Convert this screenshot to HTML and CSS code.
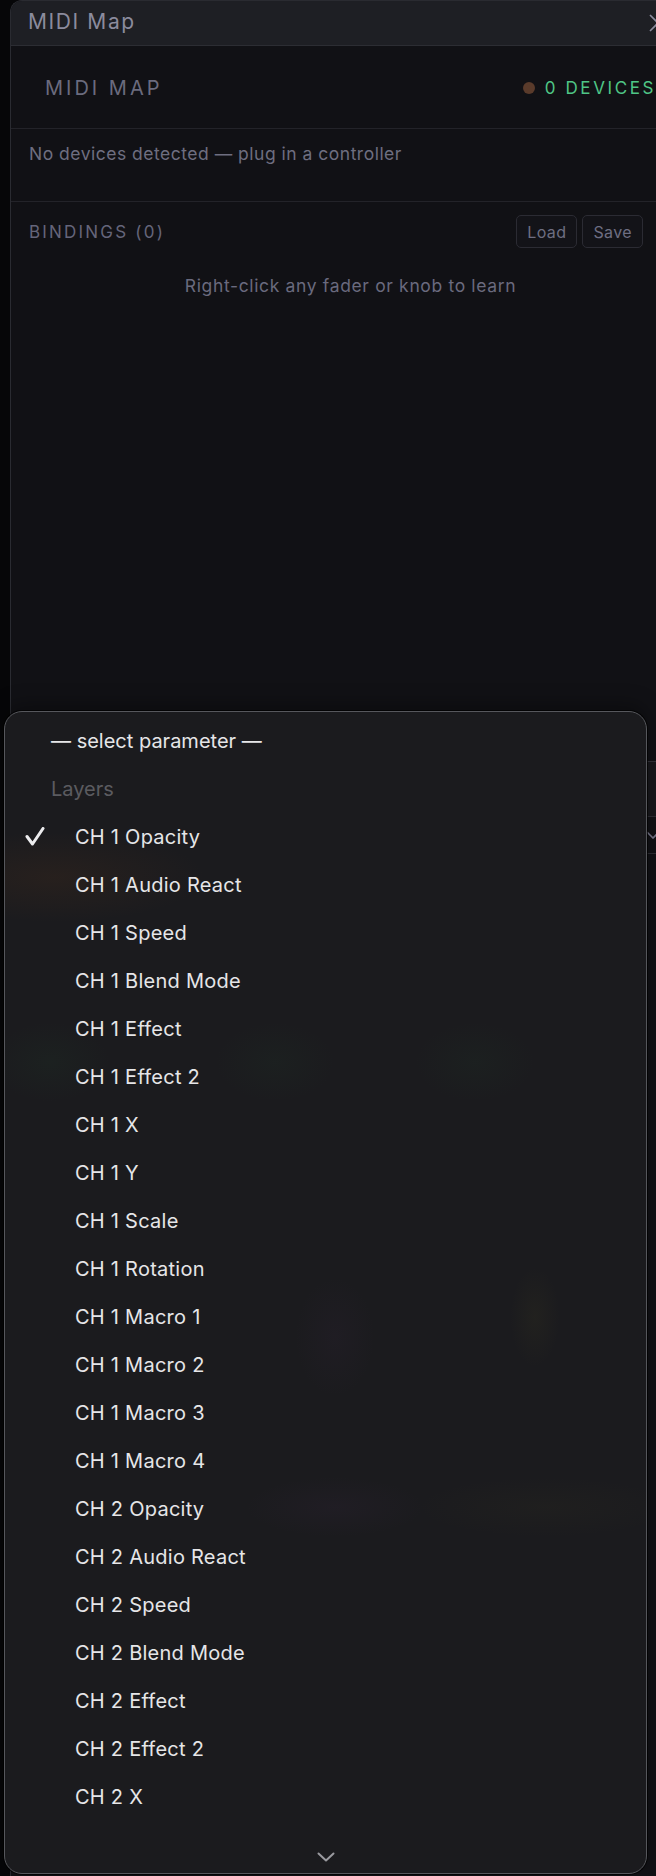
FILE: index.html
```html
<!DOCTYPE html>
<html lang="en">
<head>
<meta charset="utf-8">
<title>MIDI Map</title>
<link rel="stylesheet" href="styles.css">
</head>
<body>
<div class="stage">
  <section class="panel">
    <header class="titlebar">
      <span class="title">MIDI Map</span>
      <svg class="close" width="20" height="20" viewBox="0 0 20 20"><path d="M2 2 L18 18 M18 2 L2 18"/></svg>
    </header>
    <div class="sec head">
      <span class="h">MIDI MAP</span>
      <span class="devices"><i class="dot"></i>0 DEVICES</span>
    </div>
    <div class="sec devs">
      <p>No devices detected — plug in a controller</p>
    </div>
    <div class="sec bindings">
      <div class="brow">
        <span class="blabel">BINDINGS (0)</span>
        <div class="btns">
          <button class="btn">Load</button>
          <button class="btn">Save</button>
          <button class="btn learn">+</button>
        </div>
      </div>
      <p class="empty">Right-click any fader or knob to learn</p>
      <div class="learnbox">
        <div class="learnhead"></div>
        <div class="learnsel">
          <svg width="14" height="8" viewBox="0 0 14 8"><path d="M1 1 L7 7 L13 1"/></svg>
        </div>
      </div>
    </div>
  </section>

  <div class="menu">
    <ul class="list">
      <li class="item hdr">— select parameter —</li>
      <li class="item hdr group">Layers</li>
      <li class="item checked"><svg class="check" width="20" height="20" viewBox="0 0 20 20"><path d="M2 9.5 L7.5 17 L18 1.5"/></svg>CH 1 Opacity</li>
      <li class="item">CH 1 Audio React</li>
      <li class="item">CH 1 Speed</li>
      <li class="item">CH 1 Blend Mode</li>
      <li class="item">CH 1 Effect</li>
      <li class="item">CH 1 Effect 2</li>
      <li class="item">CH 1 X</li>
      <li class="item">CH 1 Y</li>
      <li class="item">CH 1 Scale</li>
      <li class="item">CH 1 Rotation</li>
      <li class="item">CH 1 Macro 1</li>
      <li class="item">CH 1 Macro 2</li>
      <li class="item">CH 1 Macro 3</li>
      <li class="item">CH 1 Macro 4</li>
      <li class="item">CH 2 Opacity</li>
      <li class="item">CH 2 Audio React</li>
      <li class="item">CH 2 Speed</li>
      <li class="item">CH 2 Blend Mode</li>
      <li class="item">CH 2 Effect</li>
      <li class="item">CH 2 Effect 2</li>
      <li class="item">CH 2 X</li>
    </ul>
    <div class="more">
      <svg width="18" height="10" viewBox="0 0 18 10"><path d="M1.5 1.5 L9 8.5 L16.5 1.5"/></svg>
    </div>
  </div>
</div>
</body>
</html>
```

FILE: styles.css
```css
html, body {
  margin: 0;
  padding: 0;
}
body {
  background: #060608;
  font-family: Inter, "Noto Sans", "Liberation Sans", sans-serif;
  overflow: hidden;
}
.stage {
  position: relative;
  width: 656px;
  height: 1876px;
  overflow: hidden;
}

/* ---------- panel ---------- */
.panel {
  margin-left: 10px;
  width: 680px;
  height: 1876px;
  box-sizing: border-box;
  background: #111115;
  border-left: 1px solid #2a2b31;
  border-top: 1px solid #2a2b31;
  border-top-left-radius: 12px;
  overflow: hidden;
}
.titlebar {
  height: 45px;
  box-sizing: border-box;
  background: #1e1f24;
  border-bottom: 1px solid #2c2d33;
  display: flex;
  align-items: center;
  justify-content: space-between;
  padding: 0 18px 4px 17px;
}
.title {
  font-size: 21px;
  letter-spacing: 1.6px;
  color: #8b8b9d;
}
.close {
  margin-right: 4px;
  margin-top: 4px;
  fill: none;
  stroke: #8b8b9d;
  stroke-width: 1.6;
}
.sec {
  border-bottom: 1px solid #232329;
}
.head {
  height: 83px;
  box-sizing: border-box;
  display: flex;
  align-items: center;
  justify-content: space-between;
  padding: 2px 34px 0;
}
.h {
  font-size: 20px;
  letter-spacing: 3px;
  color: #6b6b7e;
}
.devices {
  display: flex;
  align-items: center;
  font-size: 17px;
  letter-spacing: 2.6px;
  color: #4fc586;
}
.dot {
  width: 12px;
  height: 12px;
  border-radius: 50%;
  background: #5a3b2b;
  margin-right: 10px;
}
.devs {
  height: 73px;
  box-sizing: border-box;
  padding: 13px 18px 0;
}
.devs p {
  margin: 0;
  font-size: 17.5px;
  line-height: 24px;
  letter-spacing: 0.5px;
  color: #6e6e80;
}
.bindings {
  border-bottom: none;
  padding: 13px 18px 0;
}
.brow {
  display: flex;
  align-items: center;
  justify-content: space-between;
}
.blabel {
  font-size: 17px;
  letter-spacing: 2.2px;
  color: #65657a;
}
.btns {
  display: flex;
  gap: 5px;
}
.btn {
  height: 33px;
  box-sizing: border-box;
  padding: 0 10px;
  background: #131318;
  border: 1px solid #2b2b33;
  border-radius: 5px;
  font-family: inherit;
  font-size: 16px;
  letter-spacing: 0.4px;
  color: #6e6e82;
}
.btn.learn {
  border-color: transparent;
  background: transparent;
  color: #e0823c;
  padding: 0 2px;
  margin-left: 7px;
}
.empty {
  margin: 26px 0 0;
  text-align: center;
  font-size: 17.5px;
  line-height: 24px;
  letter-spacing: 0.65px;
  color: #6a6a7e;
}

/* rows hidden behind the popup, only their right edge shows */
.learnbox {
  margin-top: 463px;
  margin-right: -18px;
}
.learnhead {
  height: 54px;
  background: #18181c;
  border-top: 1px solid #34343a;
}
.learnsel {
  height: 36px;
  border-top: 1px solid #2e2e34;
  border-bottom: 1px solid #2e2e34;
  display: flex;
  align-items: center;
  justify-content: flex-end;
  padding-right: 30px;
}
.learnsel svg {
  fill: none;
  stroke: #77778a;
  stroke-width: 1.6;
}

/* ---------- popup menu ---------- */
.menu {
  position: absolute;
  left: 4px;
  top: 711px;
  width: 643px;
  height: 1163px;
  box-sizing: border-box;
  border: 1px solid #56575c;
  border-radius: 18px;
  box-shadow: 0 0 0 1px rgba(0, 0, 0, 0.7), 0 -6px 20px rgba(0, 0, 0, 0.35);
  background:
    radial-gradient(ellipse 150px 45px at 50px 165px, rgba(120, 65, 25, 0.13), transparent),
    radial-gradient(ellipse 60px 40px at 45px 350px, rgba(40, 110, 60, 0.07), transparent),
    radial-gradient(ellipse 60px 40px at 270px 350px, rgba(40, 110, 60, 0.06), transparent),
    radial-gradient(ellipse 60px 40px at 470px 350px, rgba(40, 110, 60, 0.06), transparent),
    radial-gradient(ellipse 40px 60px at 330px 625px, rgba(110, 60, 130, 0.05), transparent),
    radial-gradient(ellipse 90px 30px at 330px 795px, rgba(110, 60, 130, 0.06), transparent),
    radial-gradient(ellipse 25px 50px at 530px 605px, rgba(140, 130, 40, 0.06), transparent),
    radial-gradient(ellipse 130px 30px at 540px 795px, rgba(130, 120, 40, 0.04), transparent),
    #1b1b1e;
  display: flex;
  flex-direction: column;
  padding-top: 5px;
}
.list {
  list-style: none;
  margin: 0;
  padding: 0;
}
.item {
  position: relative;
  height: 48px;
  display: flex;
  align-items: center;
  padding-left: 70px;
  font-size: 20px;
  letter-spacing: 0.25px;
  color: #e6e6e8;
}
.item.hdr {
  padding-left: 46px;
  letter-spacing: 0;
}
.item.group {
  color: #5b5b60;
}
.check {
  position: absolute;
  left: 20px;
  top: 14px;
  fill: none;
  stroke: #ececee;
  stroke-width: 3;
  stroke-linecap: round;
  stroke-linejoin: round;
}
.more {
  margin-top: auto;
  height: 33px;
  display: flex;
  align-items: center;
  justify-content: center;
}
.more svg {
  fill: none;
  stroke: #9a9a9f;
  stroke-width: 2;
  stroke-linecap: round;
  stroke-linejoin: round;
}
```
